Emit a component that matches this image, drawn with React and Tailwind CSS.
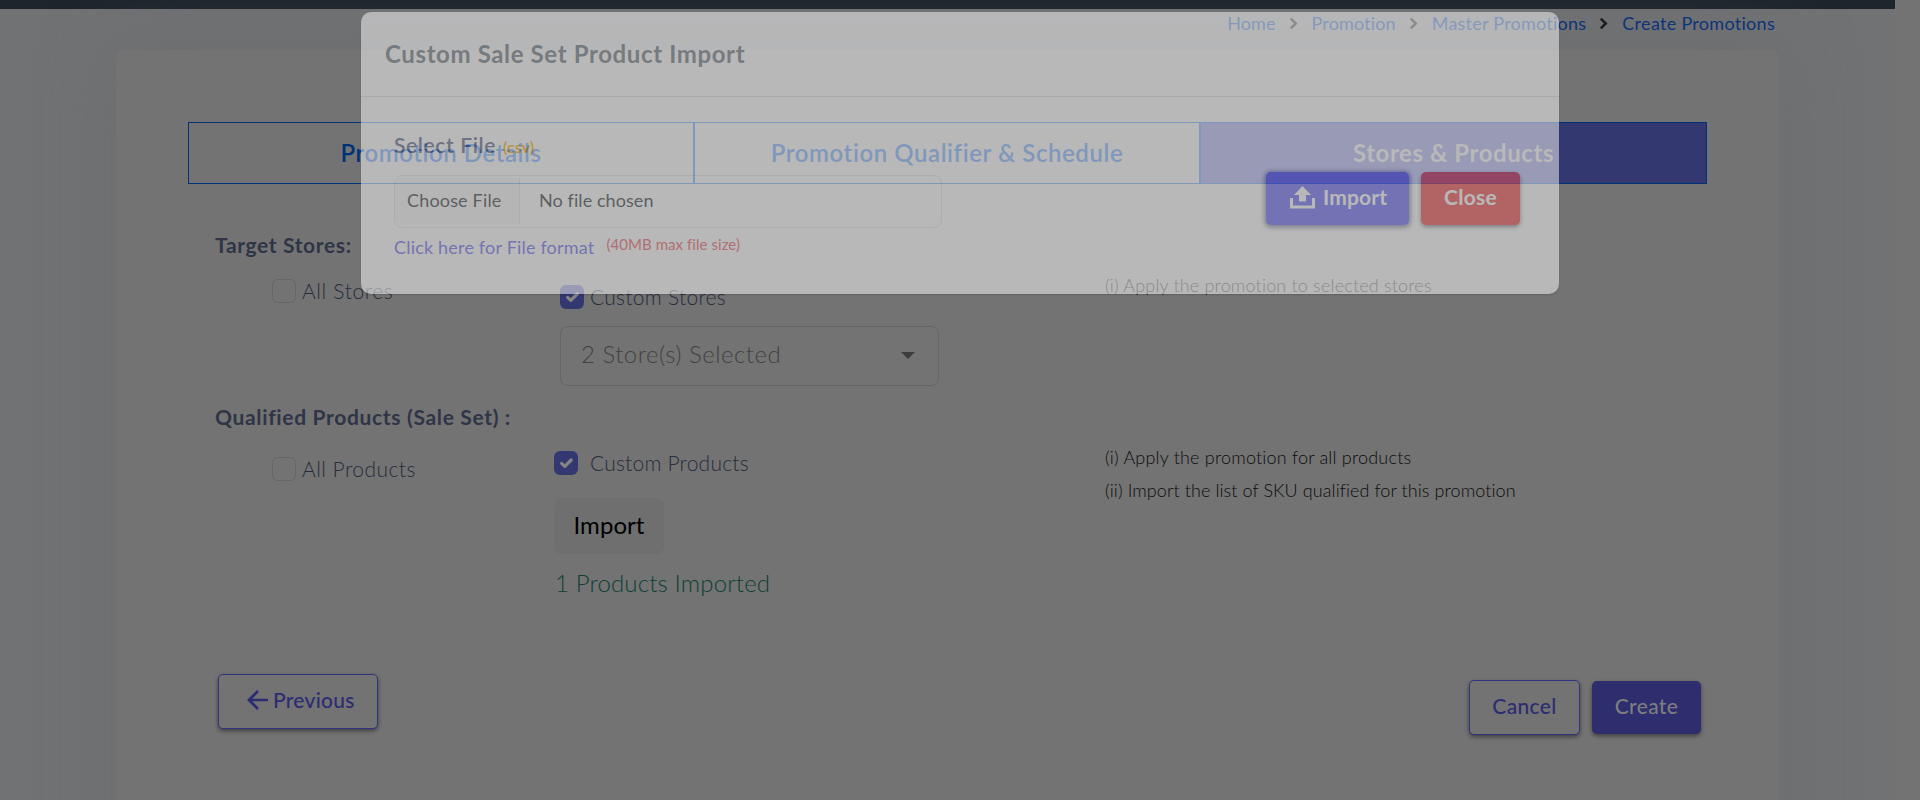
import React from 'react';

function Checkbox({ checked }) {
  if (!checked) return <span className="size-6 shrink-0 rounded-[6px] border border-[#666666]" />;
  return (
    <span className="flex size-6 shrink-0 items-center justify-center rounded-[6px] bg-[#343870]">
      <svg viewBox="0 0 24 24" className="size-6" fill="none" stroke="#858588" strokeWidth="3.2" strokeLinecap="round" strokeLinejoin="round">
        <path d="M7.600 12.400l3.200 3 6.400-6.400" />
      </svg>
    </span>
  );
}

function Chevron() {
  return (
    <svg viewBox="0 0 10 14" className="mr-[14px] ml-[13px] mt-px h-[13px] w-[9px]" fill="none" stroke="#1c1c1c" strokeWidth="2.8">
      <path d="M2 1.500L7.500 7 2 12.500" />
    </svg>
  );
}

function Breadcrumb() {
  return (
    <nav className="flex h-[28px] items-center justify-end pr-[120px] pb-px text-[18px] leading-[28px] text-[#0d3478]">
      <a className="tracking-[0.08px]">Home</a>
      <Chevron />
      <a className="tracking-[0.14px]">Promotion</a>
      <Chevron />
      <a className="tracking-[0.24px]">Master Promotions</a>
      <Chevron />
      <a className="tracking-[0.29px]">Create Promotions</a>
    </nav>
  );
}

function Tabs() {
  return (
    <div className="grid h-[62px] grid-cols-[506px_506px_507px] text-[24px] font-semibold text-[#003278]">
      <div className="flex items-center justify-center border border-[#003278] pb-[1px] tracking-[0.55px]">Promotion Details</div>
      <div className="flex items-center justify-center border border-[#003278] pb-[1px] tracking-[0.57px]">Promotion Qualifier &amp; Schedule</div>
      <div className="flex items-center justify-center border border-[#003278] bg-[#343870] pb-[1px] font-bold tracking-[0.56px] text-[#757575]">Stores &amp; Products</div>
    </div>
  );
}

function Stores() {
  return (
    <section>
      <h2 className="mt-[46px] ml-[27px] text-[21px] leading-[30px] font-bold tracking-[0.64px] text-[#2f3546]">Target Stores:</h2>
      <div className="flex h-[126px] items-start pl-[84px] text-[21px] leading-6 font-light text-[#262d3b]">
        <label className="mt-[19px] flex w-[288px] items-center gap-[6px] tracking-[0.64px]">
          <Checkbox />All Stores
        </label>
        <div className="w-[545px]">
          <label className="mt-[25px] flex items-center gap-[6px] tracking-[0.28px]">
            <Checkbox checked />Custom Stores
          </label>
          <div className="mt-[17px] flex h-[60px] w-[379px] items-center justify-between rounded-[8px] border border-[#666666] pr-[23px] pb-[5px] pl-[20px] text-[24px] leading-[30px] tracking-[0.48px] text-[#424242]">
            2 Store(s) Selected
            <svg viewBox="0 0 14 7" className="mt-[3px] h-[7px] w-[14px]" fill="#3c3c3c"><path d="M0 0h14L7 7z" /></svg>
          </div>
        </div>
        <p className="mt-[9px] text-[18px] leading-8 tracking-[0.18px] text-[#111]">(i) Apply the promotion to selected stores</p>
      </div>
    </section>
  );
}

function Products() {
  return (
    <section>
      <h2 className="mt-[16px] ml-[27px] text-[21px] leading-[30px] font-bold tracking-[0.66px] text-[#2f3546]">Qualified Products (Sale Set) :</h2>
      <div className="flex h-[169px] items-start pl-[84px] text-[21px] leading-6 font-light text-[#262d3b]">
        <label className="mt-[25px] flex w-[282px] items-center gap-[6px] tracking-[0.47px]">
          <Checkbox />All Products
        </label>
        <div className="w-[551px]">
          <label className="mt-[19px] flex items-center gap-[12px] tracking-[0.22px]">
            <Checkbox checked />Custom Products
          </label>
          <button className="mt-[23px] flex h-14 w-[110px] items-center justify-center rounded-[8px] bg-[#6f6f6f] pb-[3px] text-[24px] font-normal tracking-[0.05px] text-black">Import</button>
          <p className="mt-[11px] pl-[1px] text-[24px] leading-9 tracking-[0.15px] text-[#0d3f35]">1 Products Imported</p>
        </div>
        <div className="mt-[9px] text-[18px] leading-[33px] text-[#0c0c0c]">
          <p className="tracking-[0.2px]">(i) Apply the promotion for all products</p>
          <p className="tracking-[0.09px]">(ii) Import the list of SKU qualified for this promotion</p>
        </div>
      </div>
    </section>
  );
}

function FormActions() {
  return (
    <div className="mt-[73px] flex items-start pr-[6px] pl-[30px] text-[21px] leading-6 font-medium text-[#2c2c72]">
      <button className="flex h-[55px] w-[160px] items-center rounded-[5px] border border-[#2f3480] bg-[#737373] pb-[3px] pl-[27px] tracking-[0.28px] shadow-[0_2px_4px_rgba(0,0,0,0.45)]">
        <svg viewBox="0 0 22 20" className="mr-[5px] h-5 w-[22px]" fill="none" stroke="currentColor" strokeWidth="2.7">
          <path d="M22 10H3M12 1L3 10l9 9" />
        </svg>
        Previous
      </button>
      <button className="mt-[6px] ml-auto flex h-[55px] w-[111px] items-center justify-center rounded-[5px] border border-[#2f3480] bg-[#737373] pb-[3px] tracking-[0.34px] shadow-[0_2px_4px_rgba(0,0,0,0.45)]">Cancel</button>
      <button className="mt-[7px] ml-3 flex h-[53px] w-[109px] items-center justify-center rounded-[5px] bg-[#2e2d6e] pb-[3px] tracking-[0.32px] text-[#7d7d80] shadow-[0_2px_4px_rgba(0,0,0,0.45)]">Create</button>
    </div>
  );
}

function ImportDialog() {
  return (
    <div role="dialog" className="absolute top-[12px] left-[361px] h-[282px] w-[1198px] rounded-[10px] bg-white opacity-[0.493] shadow-[0_1px_2px_rgba(0,0,0,0.3)]">
      <header className="flex h-[85px] items-center border-b border-[#e2e2e2] pb-[1px] pl-6 text-[24px] font-bold tracking-[0.62px] text-[#7a848e]">
        Custom Sale Set Product Import
      </header>
      <div className="flex items-start justify-between pr-[39px] pl-[33px]">
        <div className="pt-[33px]">
          <div className="flex h-[30px] items-center gap-[7px] text-[21px] font-semibold tracking-[0.63px] text-[#6b7290]">
            Select File <span className="pt-[3px] text-[16px] tracking-[0.1px] text-[#ffb400]">(csv)</span>
          </div>
          <div className="mt-[15px] flex h-[53px] w-[548px] items-center rounded-[8px] border border-[#e6e6e6] pb-[2px] text-[18px] text-[#454b50]">
            <span className="flex h-[46px] w-[125px] items-center border-r border-[#e6e6e6] bg-[#fafafa] pl-[12px] tracking-[0.17px]">Choose File</span>
            <span className="pl-[19px] tracking-[0.08px]">No file chosen</span>
          </div>
          <div className="mt-[7px] flex text-[18px] leading-6 tracking-[0.19px] text-[#7676f2]">
            Click here for File format
            <span className="ml-[12px] text-[15px] leading-[19px] tracking-[0.06px] text-[#f06a76]">(40MB max file size)</span>
          </div>
        </div>
        <div className="flex gap-3 pt-[75px] text-[21px] font-bold text-white">
          <button className="flex h-[53px] w-[143px] items-center rounded-[5px] bg-[#7572f8] pb-[3px] pl-[24px] tracking-[0.15px] shadow-[0_1px_4px_2px_rgba(60,60,110,0.5)]">
            <svg viewBox="0 0 25 23" className="mr-[8px] h-[23px] w-[25px]" fill="currentColor">
              <path d="M12.500 0L21 9h-5v6.500H9V9H4z" />
              <path d="M0 12h3v7.500h19V12h3v10.500H0z" />
            </svg>
            Import
          </button>
          <button className="flex h-[53px] w-[99px] items-center justify-center rounded-[5px] bg-[#f25556] pb-[3px] tracking-[0.28px] shadow-[0_2px_4px_rgba(0,0,0,0.45)]">Close</button>
        </div>
      </div>
    </div>
  );
}

export default function App() {
  return (
    <div className="relative h-[800px] w-[1920px] overflow-hidden bg-[#737373] font-['Lato','Open_Sans',sans-serif]">
      <div className="h-full w-[1895px] overflow-hidden bg-[#717274]">
        <div className="h-[9px] bg-[#1e252c]" />
        <Breadcrumb />
        <main className="mt-[13px] ml-[116px] h-[900px] w-[1663px] rounded-[8px] bg-[#737373] px-[72px] pt-[72px] shadow-[0_0_70px_rgba(104,106,110,0.55)]">
          <Tabs />
          <Stores />
          <Products />
          <FormActions />
        </main>
      </div>
      <ImportDialog />
    </div>
  );
}
